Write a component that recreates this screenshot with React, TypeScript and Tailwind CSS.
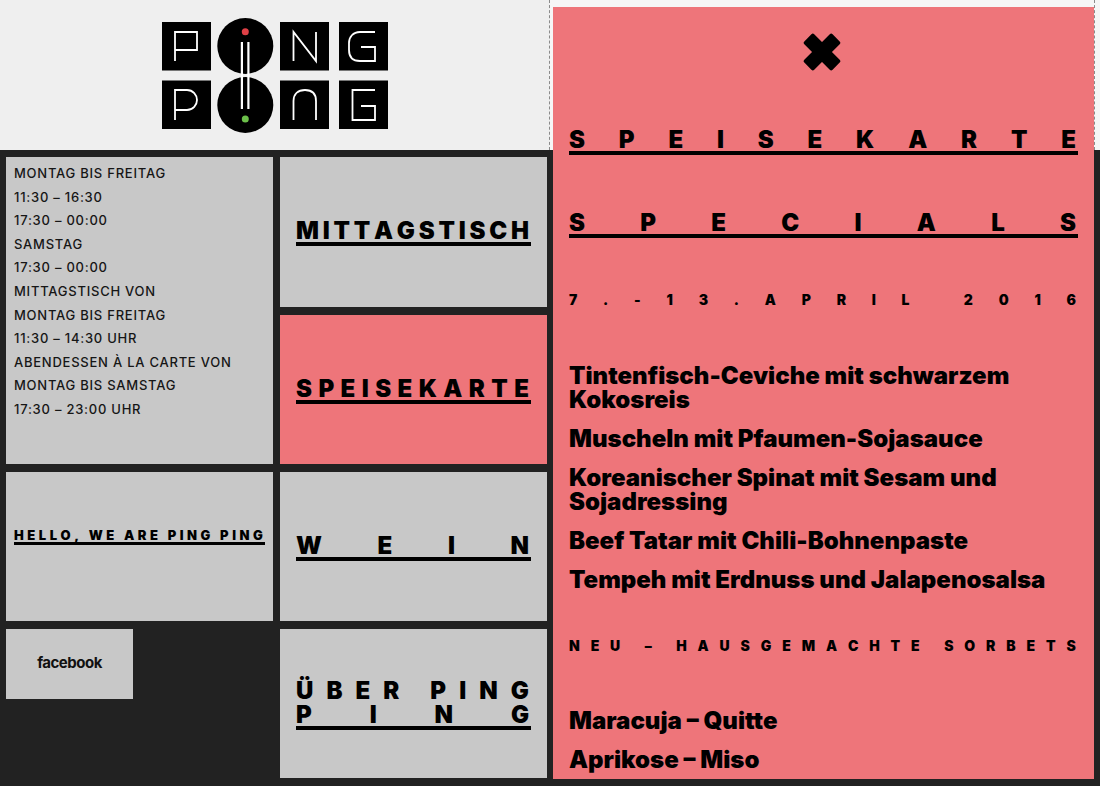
const heavy = "font-['Inter','Liberation_Sans',sans-serif] font-black text-black";

// Spreads the characters of a line over its full width, like the justified headlines
function Spread({ text, className }: { text: string; className: string }) {
  return (
    <div className={`flex justify-between pr-[2px] whitespace-pre ${className}`}>
      {text.split("").map((ch, i) => (
        <span key={i}>{ch}</span>
      ))}
    </div>
  );
}

function Heading({ lines }: { lines: string[] }) {
  return (
    <div className="border-b-4 border-black">
      {lines.map((line) => (
        <Spread key={line} text={line} className={`pt-[2px] text-[24px] leading-[22px] ${heavy}`} />
      ))}
    </div>
  );
}

function Tile({ lines, active, tall }: { lines: string[]; active?: boolean; tall?: boolean }) {
  return (
    <div
      className={`flex flex-col justify-center px-4 ${tall ? "h-[150px]" : "h-[149px]"} ${
        active ? "bg-[#ee757a]" : "bg-[#c8c8c8]"
      }`}
    >
      <Heading lines={lines} />
    </div>
  );
}

function Logo() {
  return (
    <svg width="226" height="115" viewBox="162 18 226 115" className="block">
      <rect x="162" y="22" width="49" height="48.5" />
      <rect x="280" y="22" width="49" height="48.5" />
      <rect x="339" y="22" width="49" height="48.5" />
      <rect x="162" y="80.5" width="49" height="48.5" />
      <rect x="280" y="80.5" width="49" height="48.5" />
      <rect x="339" y="80.5" width="49" height="48.5" />
      <circle cx="245.3" cy="46" r="28" />
      <circle cx="245.3" cy="105" r="28" />
      <g fill="none" stroke="#fff" strokeWidth="1.8">
        <path d="M175 61V32H197V50H175" />
        <path d="M293.5 61V32L316 61V32" />
        <path d="M375 32H360C353 32 349 37 349 43V50C349 57 353 61 360 61H375V47H361" />
        <path d="M175 120V90H187C193 90 197 95 197 100C197 105 193 110 187 110H175" />
        <path d="M293.5 120V101C293.5 94 298 90 305 90C312 90 316 94 316 101V120" />
        <path d="M375 90H352.5V120H375V106H361" />
        <path d="M241.9 42V109M248.4 42V109" strokeWidth="2.2" />
      </g>
      <circle cx="245.3" cy="31.7" r="3.5" fill="#e04046" />
      <circle cx="245.3" cy="119" r="3.5" fill="#6cc04a" />
    </svg>
  );
}

const hours = [
  "MONTAG BIS FREITAG",
  "11:30 – 16:30",
  "17:30 – 00:00",
  "SAMSTAG",
  "17:30 – 00:00",
  "MITTAGSTISCH VON",
  "MONTAG BIS FREITAG",
  "11:30 – 14:30 UHR",
  "ABENDESSEN À LA CARTE VON",
  "MONTAG BIS SAMSTAG",
  "17:30 – 23:00 UHR",
];

const specials = [
  "Tintenfisch-Ceviche mit schwarzem Kokosreis",
  "Muscheln mit Pfaumen-Sojasauce",
  "Koreanischer Spinat mit Sesam und Sojadressing",
  "Beef Tatar mit Chili-Bohnenpaste",
  "Tempeh mit Erdnuss und Jalapenosalsa",
];

export default function App() {
  return (
    <div className="flex h-[786px] w-[1100px] overflow-hidden bg-[#222222] font-['Inter','Liberation_Sans',sans-serif]">
      <div className="flex w-[550px] shrink-0 flex-col">
        <header className="flex h-[150px] items-center justify-center border-r border-dashed border-[#8a8a8a] bg-[#efefef] pl-[1px]">
          <Logo />
        </header>
        <div className="grid grid-cols-[267px_267px] gap-x-[7px] pt-[7px] pl-[6px]">
          <div className="flex flex-col gap-[8px]">
            <div className="h-[307px] bg-[#c8c8c8] px-2 pt-[5px]">
              {hours.map((line, i) => (
                <p key={i} className="text-[13px] leading-[23.6px] font-medium tracking-[0.76px] text-[#161616]">
                  {line}
                </p>
              ))}
            </div>
            <div className="flex h-[149px] flex-col justify-center bg-[#c8c8c8] px-2 pb-[20px]">
              <div className="border-b-[3px] border-black">
                <Spread text="HELLO, WE ARE PING PING" className={`text-[13px] leading-[14px] ${heavy}`} />
              </div>
            </div>
            <div className="flex h-[70px] w-[127px] items-center justify-center bg-[#c8c8c8] pb-[2px] text-[15px] font-bold tracking-[-0.5px] text-[#111]">
              facebook
            </div>
          </div>
          <div className="flex flex-col gap-[8px]">
            <Tile lines={["MITTAGSTISCH"]} tall />
            <Tile lines={["SPEISEKARTE"]} active />
            <Tile lines={["WEIN"]} />
            <Tile lines={["ÜBER PING", "PING"]} />
          </div>
        </div>
      </div>
      <div className="relative h-[786px] w-[550px]">
        <div className="absolute inset-x-0 top-0 h-[150px] bg-[#f6f6f6]" />
        <div className="absolute top-0 left-[544px] h-[150px] border-r border-dashed border-[#8a8a8a]" />
        <main className="relative mt-[7px] ml-[3px] h-[772px] w-[541px] overflow-hidden bg-[#ee757a] px-4">
          <div className="flex h-[90px] items-center justify-center pr-[4px]">
            <svg width="38" height="38" viewBox="0 0 38 38">
              <g transform="rotate(45 19 19)">
                <rect x="-1" y="12" width="40" height="14" rx="2" />
                <rect x="12" y="-1" width="14" height="40" rx="2" />
              </g>
            </svg>
          </div>
          <div className="mt-[30px]">
            <Heading lines={["SPEISEKARTE"]} />
          </div>
          <div className="mt-[55px]">
            <Heading lines={["SPECIALS"]} />
          </div>
          <div className="mt-[54px]">
            <Spread text="7.-13.APRIL 2016" className={`text-[14px] leading-[16px] ${heavy}`} />
          </div>
          <ul className="mt-[56px] flex flex-col gap-[15px]">
            {specials.map((dish) => (
              <li key={dish} className={`text-[24px] leading-[24px] ${heavy}`}>
                {dish}
              </li>
            ))}
          </ul>
          <div className="mt-[46px]">
            <Spread text="NEU – HAUSGEMACHTE SORBETS" className={`text-[14px] leading-[16px] ${heavy}`} />
          </div>
          <ul className="mt-[55px] flex flex-col gap-[15px]">
            <li className={`text-[24px] leading-[24px] ${heavy}`}>Maracuja – Quitte</li>
            <li className={`text-[24px] leading-[24px] ${heavy}`}>Aprikose – Miso</li>
          </ul>
        </main>
      </div>
    </div>
  );
}
